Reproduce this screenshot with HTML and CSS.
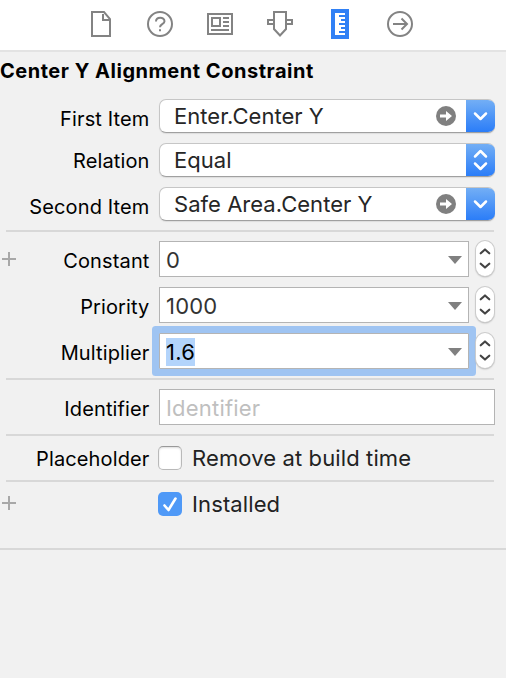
FILE: index.html
```html
<!DOCTYPE html>
<html lang="en">
<head>
<meta charset="utf-8">
<title>Size Inspector</title>
<link rel="stylesheet" href="styles.css">
</head>
<body>
<nav class="toolbar">
  <svg class="tab" viewBox="0 0 30 30"><path d="M7 3h12l6 7v17H7zM18 5v6h6"/></svg>
  <svg class="tab" viewBox="0 0 30 30"><circle cx="15" cy="15" r="12"/><path d="M11 12.500c0-5 8.500-4.800 8.500-.3 0 3-4.500 3-4.500 6M15 20.200v2"/></svg>
  <svg class="tab" viewBox="0 0 30 30"><path d="M3 5h24v20H3zM7 9h8v8H7zM18 9h6M18 13h6M18 17h6M6 21h18"/></svg>
  <svg class="tab" viewBox="0 0 30 30"><path d="M9 3h12v17l-6 6.500L9 20zM9 11H3v4h6M21 11h6v4h-6"/></svg>
  <svg class="tab active" viewBox="0 0 30 30"><path class="ruler" d="M6 0h18v30H6z"/><path class="teeth" d="M10 4h10v2h-6v2h6v2h-4v2h4v2h-6v2h6v2h-4v2h4v2h-6v2h6v2H10z"/></svg>
  <svg class="tab" viewBox="0 0 30 30"><circle cx="15" cy="15" r="12"/><path d="M8 15h14M16.500 9.500L22 15l-5.500 5.500"/></svg>
</nav>
<main class="inspector">
  <h1 class="title">Center Y Alignment Constraint</h1>
  <div class="row popup-row">
    <label class="label">First Item</label>
    <div class="popup"><span class="value">Enter.Center Y</span>
      <svg class="go" viewBox="0 0 20 20"><circle cx="10" cy="10" r="10"/><path d="M4 8.500h6V5l6 5-6 5v-3.500H4z"/></svg>
      <span class="cap"><svg viewBox="0 0 29 34"><path d="M9 14.500l5.500 5.500 5.500-5.500"/></svg></span></div>
  </div>
  <div class="row popup-row">
    <label class="label up">Relation</label>
    <div class="popup"><span class="value">Equal</span>
      <span class="cap"><svg viewBox="0 0 29 34"><path d="M9 13.500l5.500-5.500 5.500 5.500M9 20.500l5.500 5.500 5.500-5.500"/></svg></span></div>
  </div>
  <div class="row popup-row last">
    <label class="label">Second Item</label>
    <div class="popup"><span class="value">Safe Area.Center Y</span>
      <svg class="go" viewBox="0 0 20 20"><circle cx="10" cy="10" r="10"/><path d="M4 8.500h6V5l6 5-6 5v-3.500H4z"/></svg>
      <span class="cap"><svg viewBox="0 0 29 34"><path d="M9 14.500l5.500 5.500 5.500-5.500"/></svg></span></div>
  </div>
  <hr class="rule">
  <div class="row field-row">
    <svg class="plus" viewBox="0 0 14 14"><path d="M0 7h14M7 0v14"/></svg>
    <label class="label">Constant</label>
    <div class="field"><span class="number">0</span><i class="arrow"></i></div>
    <svg class="stepper" viewBox="0 0 19 36"><path d="M5 12.500l4.500-4 4.500 4M5 23.500l4.500 4 4.500-4"/></svg>
  </div>
  <div class="row field-row">
    <label class="label">Priority</label>
    <div class="field"><span class="number">1000</span><i class="arrow"></i></div>
    <svg class="stepper" viewBox="0 0 19 36"><path d="M5 12.500l4.500-4 4.500 4M5 23.500l4.500 4 4.500-4"/></svg>
  </div>
  <div class="row field-row">
    <label class="label">Multiplier</label>
    <div class="field focused"><span class="number selected">1.6</span><i class="arrow"></i></div>
    <svg class="stepper" viewBox="0 0 19 36"><path d="M5 12.500l4.500-4 4.500 4M5 23.500l4.500 4 4.500-4"/></svg>
  </div>
  <hr class="rule tight">
  <div class="row field-row">
    <label class="label">Identifier</label>
    <div class="field wide"><span class="number hint">Identifier</span></div>
  </div>
  <hr class="rule tight">
  <div class="row check-row">
    <label class="label">Placeholder</label>
    <span class="box"></span><span class="option">Remove at build time</span>
  </div>
  <hr class="rule check-rule">
  <div class="row check-row">
    <svg class="plus" viewBox="0 0 14 14"><path d="M0 7h14M7 0v14"/></svg>
    <label class="label"></label>
    <span class="box checked"><svg viewBox="0 0 24 24"><path d="M6.500 13.500l4 4.500L17.500 6.500"/></svg></span><span class="option">Installed</span>
  </div>
  <hr class="rule end">
</main>
</body>
</html>
```
FILE: styles.css
```css
* { box-sizing: border-box; }
body { margin: 0; min-height: 678px; background: #f1f1f1; color: #000; font-family: Inter, "Liberation Sans", sans-serif; font-size: 20px; }
.toolbar { display: flex; gap: 30px; height: 52px; padding: 9px 0 0 85px; background: #fff; border-bottom: 2px solid #e3e3e3; }
.tab { width: 30px; height: 30px; fill: none; stroke: #838383; stroke-width: 2; }
.ruler { fill: #3080f5; stroke: none; }
.teeth { fill: #fff; stroke: none; }
.title { margin: 0; height: 47px; padding-top: 7px; font-size: 20px; line-height: 24px; font-weight: 700; letter-spacing: .52px; white-space: nowrap; }
.row { display: flex; position: relative; }
.popup-row { height: 34px; margin-bottom: 10px; }
.popup-row.last { margin-bottom: 9px; }
.label { width: 149.500px; margin-right: 9.500px; padding-top: 8px; text-align: right; line-height: 24px; letter-spacing: .13px; white-space: nowrap; }
.label.up { padding-top: 6px; }
.popup { display: flex; align-items: center; width: 336px; height: 34px; padding-left: 14px; background: #fff; border-radius: 7px; overflow: hidden; border: 1px solid #c6c6c6; border-bottom-color: #a0a0a0; border-right: 0; box-shadow: 0 1px 1px #ddd; }
.value { flex: 1; font-size: 22px; line-height: 32px; color: #262626; letter-spacing: .03px; white-space: nowrap; }
.go { width: 20px; height: 20px; margin-right: 10px; fill: #808080; }
.go path { fill: #fff; }
.cap { width: 29px; height: 34px; background: linear-gradient(#75b0f5, #2b7df8); border-bottom: 1px solid #1768ef; }
.cap svg { display: block; width: 29px; height: 34px; fill: none; stroke: #fff; stroke-width: 2.5; stroke-linecap: round; stroke-linejoin: round; }
.rule { height: 2px; margin: 0 12px 9px 6px; border: 0; background: #d8d8d8; }
.field-row { height: 36px; margin-bottom: 10px; }
.plus { position: absolute; left: 2px; top: 11px; width: 14px; height: 14px; stroke: #a8a8a8; stroke-width: 2; }
.check-row .plus { top: 4px; }
.field { display: flex; align-items: center; justify-content: space-between; width: 310px; height: 36px; padding: 2px 6px 0; background: #fff; border: 1px solid #b4b4b4; }
.field.wide { width: 336px; }
.focused { box-shadow: 0 0 0 7px #9fc4f2; border-radius: 1px; }
.number { font-size: 22px; line-height: 28px; color: #333; letter-spacing: .2px; }
.selected { background: #b3d4fb; color: #000; }
.hint { color: #bfbfbf; }
.arrow { margin-top: -1px; border: 7px solid transparent; border-top: 8px solid #808080; border-bottom: 0; }
.stepper { position: relative; width: 18px; height: 35px; margin-left: 7px; border-radius: 9px; background: #fff; box-shadow: 0 0 0 1px #ccc, 0 1px 2px #999; fill: none; stroke: #444; stroke-width: 2.3; stroke-linecap: round; stroke-linejoin: round; }
.rule.tight { margin-top: -1px; }
.check-row { height: 24px; }
.check-row .label { margin-right: 8.500px; padding-top: 1px; }
.rule.tight + .check-row { margin-top: 10px; }
.box { width: 24px; height: 24px; border: 1px solid #b9b9b9; border-top-color: #999; border-radius: 5px; background: #fff; box-shadow: inset 0 1px 2px #ddd; }
.checked { border: 0; background: #4f99f7; box-shadow: none; }
.checked svg { display: block; fill: none; stroke: #fff; stroke-width: 2.6; stroke-linecap: round; stroke-linejoin: round; }
.option { margin-left: 10px; font-size: 22px; line-height: 24px; color: #222; letter-spacing: .12px; white-space: nowrap; }
.check-rule { margin-top: 10px; margin-bottom: 10px; }
.rule.end { margin: 32px 0 0; }
```
